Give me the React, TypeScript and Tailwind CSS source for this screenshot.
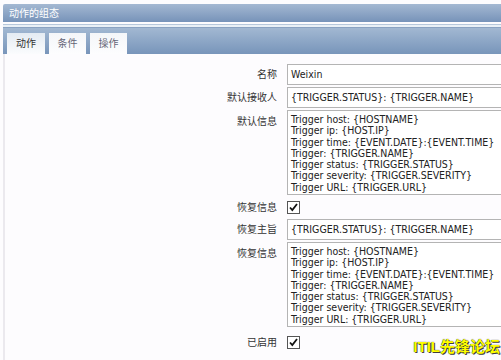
import React from "react";

const msgLines = [
  "Trigger host: {HOSTNAME}",
  "Trigger ip: {HOST.IP}",
  "Trigger time: {EVENT.DATE}:{EVENT.TIME}",
  "Trigger: {TRIGGER.NAME}",
  "Trigger status: {TRIGGER.STATUS}",
  "Trigger severity: {TRIGGER.SEVERITY}",
  "Trigger URL: {TRIGGER.URL}",
];

const font = { fontFamily: '"Liberation Sans", "Noto Sans CJK SC", sans-serif' };
const mono = { fontFamily: '"DejaVu Sans Condensed", "DejaVu Sans", sans-serif' };

function Label({ children, top }: { children: React.ReactNode; top?: boolean }) {
  return (
    <div className={`w-[278px] shrink-0 pr-[1px] text-right text-[10px] text-[#333] ${top ? "pt-[4px]" : "self-center"}`}>
      {children}
    </div>
  );
}

function Input({ value }: { value: string }) {
  return (
    <div
      className="h-[21px] w-[230px] shrink-0 border border-[#b4b4b4] bg-white px-[3px] text-[10.5px] leading-[19px] whitespace-nowrap text-[#222]"
      style={mono}
    >
      {value}
    </div>
  );
}

function Area() {
  return (
    <div
      className="h-[85px] w-[230px] shrink-0 border border-[#b4b4b4] bg-white px-[3px] pt-[3px] text-[10.5px] leading-[11.3px] text-[#222]"
      style={mono}
    >
      {msgLines.map((l) => (
        <div key={l} className="whitespace-nowrap">{l}</div>
      ))}
    </div>
  );
}

function Check() {
  return (
    <div className="flex h-[13px] w-[13px] items-center justify-center border border-[#555] bg-white">
      <svg width="11" height="11" viewBox="0 0 11 11">
        <path d="M2 5.5 L4.3 8 L9 2" fill="none" stroke="#111" strokeWidth="1.8" />
      </svg>
    </div>
  );
}

export default function App() {
  return (
    <div className="relative h-[360px] w-[501px] overflow-hidden bg-[#fdfcfe]" style={font}>
      <div className="pl-[3px] pt-[4px]">
        <div className="flex h-[18px] items-center rounded-tl-[2px] bg-gradient-to-b from-[#a4b8d2] to-[#7793b9] pl-[6px] text-[10px] text-white">
          动作的组态
        </div>
        <div className="h-[4px] border-b border-[#8aa2c2] bg-[#e9f0f6]">
          <div className="mt-[2px] h-[1px] bg-[#b7c8dc]" />
        </div>
        <div className="flex h-[26px] items-end gap-[4px] bg-gradient-to-b from-[#a2b8d2] to-[#7895ba] pl-[4px]">
          <div className="flex h-[21px] w-[38px] items-center justify-center bg-gradient-to-b from-[#e4ebf3] to-[#fbfcfd] text-[10px] text-[#333]">
            动作
          </div>
          <div className="flex h-[21px] w-[37px] items-center justify-center bg-gradient-to-b from-[#f4f6f9] to-[#fdfdfe] text-[10px] text-[#667]">
            条件
          </div>
          <div className="flex h-[21px] w-[37px] items-center justify-center bg-gradient-to-b from-[#f4f6f9] to-[#fdfdfe] text-[10px] text-[#667]">
            操作
          </div>
        </div>
      </div>
      <div className="ml-[3px] flex h-[307px] flex-col border-l-[2px] border-[#ebe9ee] pt-[10px]">
        <div className="-ml-[5px] flex flex-col gap-[2px]">
          <div className="flex gap-[9px]">
            <Label>名称</Label>
            <Input value="Weixin" />
          </div>
          <div className="flex gap-[9px]">
            <Label>默认接收人</Label>
            <Input value="{TRIGGER.STATUS}: {TRIGGER.NAME}" />
          </div>
          <div className="flex gap-[9px]">
            <Label top>默认信息</Label>
            <Area />
          </div>
          <div className="flex h-[20px] items-center gap-[9px]">
            <Label>恢复信息</Label>
            <Check />
          </div>
          <div className="flex gap-[9px]">
            <Label>恢复主旨</Label>
            <Input value="{TRIGGER.STATUS}: {TRIGGER.NAME}" />
          </div>
          <div className="flex gap-[9px]">
            <Label top>恢复信息</Label>
            <Area />
          </div>
          <div className="mt-[4px] flex h-[18px] items-center gap-[9px]">
            <Label>已启用</Label>
            <Check />
          </div>
        </div>
      </div>
      <div
        className="absolute bottom-[2px] right-[1px] text-[15px] font-bold text-[#ffff00]"
        style={{ textShadow: "0 0 1px #000, 1px 1px 0 #444" }}
      >
        ITIL先锋论坛
      </div>
    </div>
  );
}
